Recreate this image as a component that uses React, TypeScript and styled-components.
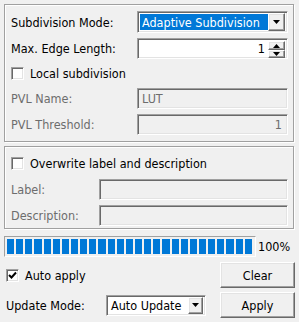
import styled, { createGlobalStyle } from 'styled-components'

const GlobalStyle = createGlobalStyle`
  html, body {
    margin: 0;
    padding: 0;
    background: #f0f0f0;
  }
  body {
    font-family: "DejaVu Sans Condensed", "DejaVu Sans", sans-serif;
    font-size: 12.5px;
    color: #000;
  }
`

const Page = styled.div`
  width: 299px;
  height: 322px;
  box-sizing: border-box;
  padding: 4px;
  display: flex;
  flex-direction: column;
  overflow: hidden;
`

const GroupBox = styled.div<{ $pb?: number }>`
  margin-right: 1px;
  border: 1px solid #a0a0a0;
  box-shadow: inset 1px 1px 0 #fff, 1px 1px 0 #fff;
  padding: 6px 5px ${(p) => p.$pb ?? 6}px 6px;
  display: flex;
  flex-direction: column;
  gap: 5px;
  & + & {
    margin-top: 4px;
  }
`

const Row = styled.div<{ $h: number }>`
  height: ${(p) => p.$h}px;
  display: flex;
  align-items: center;
`

const Label = styled.div<{ $w: number; $disabled?: boolean }>`
  width: ${(p) => p.$w}px;
  flex: none;
  white-space: nowrap;
  color: ${(p) => (p.$disabled ? '#6d6d6d' : '#000')};
`

const Sunken = styled.div<{ $bg?: string }>`
  flex: 1;
  height: 100%;
  box-sizing: border-box;
  border: 1px solid;
  border-color: #a0a0a0 #fff #fff #a0a0a0;
  box-shadow: inset 1px 1px 0 #696969, inset -1px -1px 0 #e3e3e3;
  background: ${(p) => p.$bg ?? '#fff'};
  padding: 2px;
  display: flex;
  align-items: center;
`

const FieldText = styled.div<{ $align?: string; $disabled?: boolean }>`
  flex: 1;
  padding: 0 3px 0 2px;
  text-align: ${(p) => p.$align ?? 'left'};
  color: ${(p) => (p.$disabled ? '#6d6d6d' : '#000')};
  white-space: nowrap;
`

const Selection = styled.div`
  flex: 1;
  align-self: stretch;
  background: #0078d7;
  color: #fff;
  padding-left: 2px;
  display: flex;
  align-items: center;
  white-space: nowrap;
  overflow: hidden;
`

const RaisedBtn = styled.div<{ $w: number; $h: number }>`
  width: ${(p) => p.$w}px;
  height: ${(p) => p.$h}px;
  flex: none;
  box-sizing: border-box;
  border: 1px solid;
  border-color: #fff #696969 #696969 #fff;
  box-shadow: inset -1px -1px 0 #a0a0a0, inset 1px 1px 0 #e3e3e3;
  background: #f0f0f0;
  display: flex;
  align-items: center;
  justify-content: center;
`

const SpinStack = styled.div`
  display: flex;
  flex-direction: column;
  align-self: stretch;
`

const CheckRow = styled.label`
  display: flex;
  align-items: center;
  gap: 6px;
  white-space: nowrap;
`

const CheckBox = styled.span`
  width: 13px;
  height: 13px;
  box-sizing: border-box;
  border: 1px solid;
  border-color: #a0a0a0 #fff #fff #a0a0a0;
  box-shadow: inset 1px 1px 0 #696969, inset -1px -1px 0 #e3e3e3;
  background: #fff;
  display: flex;
  align-items: center;
  justify-content: center;
`

const ProgressRow = styled.div`
  margin-top: 7px;
  height: 23px;
  display: flex;
  align-items: center;
  gap: 2px;
`

const ProgressBar = styled.div`
  width: 252px;
  height: 100%;
  box-sizing: border-box;
  border: 1px solid;
  border-color: #a0a0a0 #fff #fff #a0a0a0;
  padding: 2px 3px 2px 2px;
  display: flex;
  gap: 2px;
`

const Block = styled.div`
  flex: 1;
  background: #0078d7;
`

const BottomRow = styled.div<{ $mt: number }>`
  margin-top: ${(p) => p.$mt}px;
  height: 26px;
  display: flex;
  align-items: center;
  justify-content: space-between;
`

const SmallCombo = styled(Sunken)`
  flex: none;
  width: 100px;
  height: 21px;
`

const ModeGroup = styled.div`
  display: flex;
  align-items: center;
  padding-left: 2px;
`

const Arrow = ({ up }: { up?: boolean }) => (
  <svg width="7" height="4" viewBox="0 0 7 4">
    <path d={up ? 'M3.5 0 L7 4 L0 4 Z' : 'M0 0 L7 0 L3.5 4 Z'} fill="#000" />
  </svg>
)

const Tick = () => (
  <svg width="9" height="9" viewBox="0 0 9 9">
    <path d="M1 4 L3.5 6.5 L8 1.5" stroke="#000" strokeWidth="2" fill="none" />
  </svg>
)

export default function App() {
  return (
    <>
      <GlobalStyle />
      <Page>
        <GroupBox>
          <Row $h={22}>
            <Label $w={126}>Subdivision Mode:</Label>
            <Sunken>
              <Selection>Adaptive Subdivision</Selection>
              <RaisedBtn $w={17} $h={18}>
                <Arrow />
              </RaisedBtn>
            </Sunken>
          </Row>
          <Row $h={21}>
            <Label $w={126}>Max. Edge Length:</Label>
            <Sunken>
              <FieldText $align="right">1</FieldText>
              <SpinStack>
                <RaisedBtn $w={17} $h={9}>
                  <Arrow up />
                </RaisedBtn>
                <RaisedBtn $w={17} $h={8}>
                  <Arrow />
                </RaisedBtn>
              </SpinStack>
            </Sunken>
          </Row>
          <Row $h={19}>
            <CheckRow>
              <CheckBox />
              Local subdivision
            </CheckRow>
          </Row>
          <Row $h={21}>
            <Label $w={126} $disabled>PVL Name:</Label>
            <Sunken $bg="#f0f0f0">
              <FieldText $disabled>LUT</FieldText>
            </Sunken>
          </Row>
          <Row $h={21}>
            <Label $w={126} $disabled>PVL Threshold:</Label>
            <Sunken $bg="#f0f0f0">
              <FieldText $align="right" $disabled>1</FieldText>
            </Sunken>
          </Row>
        </GroupBox>

        <GroupBox $pb={2}>
          <Row $h={21}>
            <CheckRow>
              <CheckBox />
              Overwrite label and description
            </CheckRow>
          </Row>
          <Row $h={21}>
            <Label $w={88} $disabled>Label:</Label>
            <Sunken $bg="#f0f0f0" />
          </Row>
          <Row $h={21}>
            <Label $w={88} $disabled>Description:</Label>
            <Sunken $bg="#f0f0f0" />
          </Row>
        </GroupBox>

        <ProgressRow>
          <ProgressBar>
            {Array.from({ length: 27 }).map((_, i) => (
              <Block key={i} />
            ))}
          </ProgressBar>
          <span>100%</span>
        </ProgressRow>

        <BottomRow $mt={5}>
          <ModeGroup>
            <CheckRow>
              <CheckBox>
                <Tick />
              </CheckBox>
              Auto apply
            </CheckRow>
          </ModeGroup>
          <RaisedBtn $w={75} $h={26}>Clear</RaisedBtn>
        </BottomRow>

        <BottomRow $mt={4}>
          <ModeGroup>
            <Label $w={100}>Update Mode:</Label>
            <SmallCombo>
              <FieldText>Auto Update</FieldText>
              <RaisedBtn $w={15} $h={17}>
                <Arrow />
              </RaisedBtn>
            </SmallCombo>
          </ModeGroup>
          <RaisedBtn $w={75} $h={26}>Apply</RaisedBtn>
        </BottomRow>
      </Page>
    </>
  )
}
